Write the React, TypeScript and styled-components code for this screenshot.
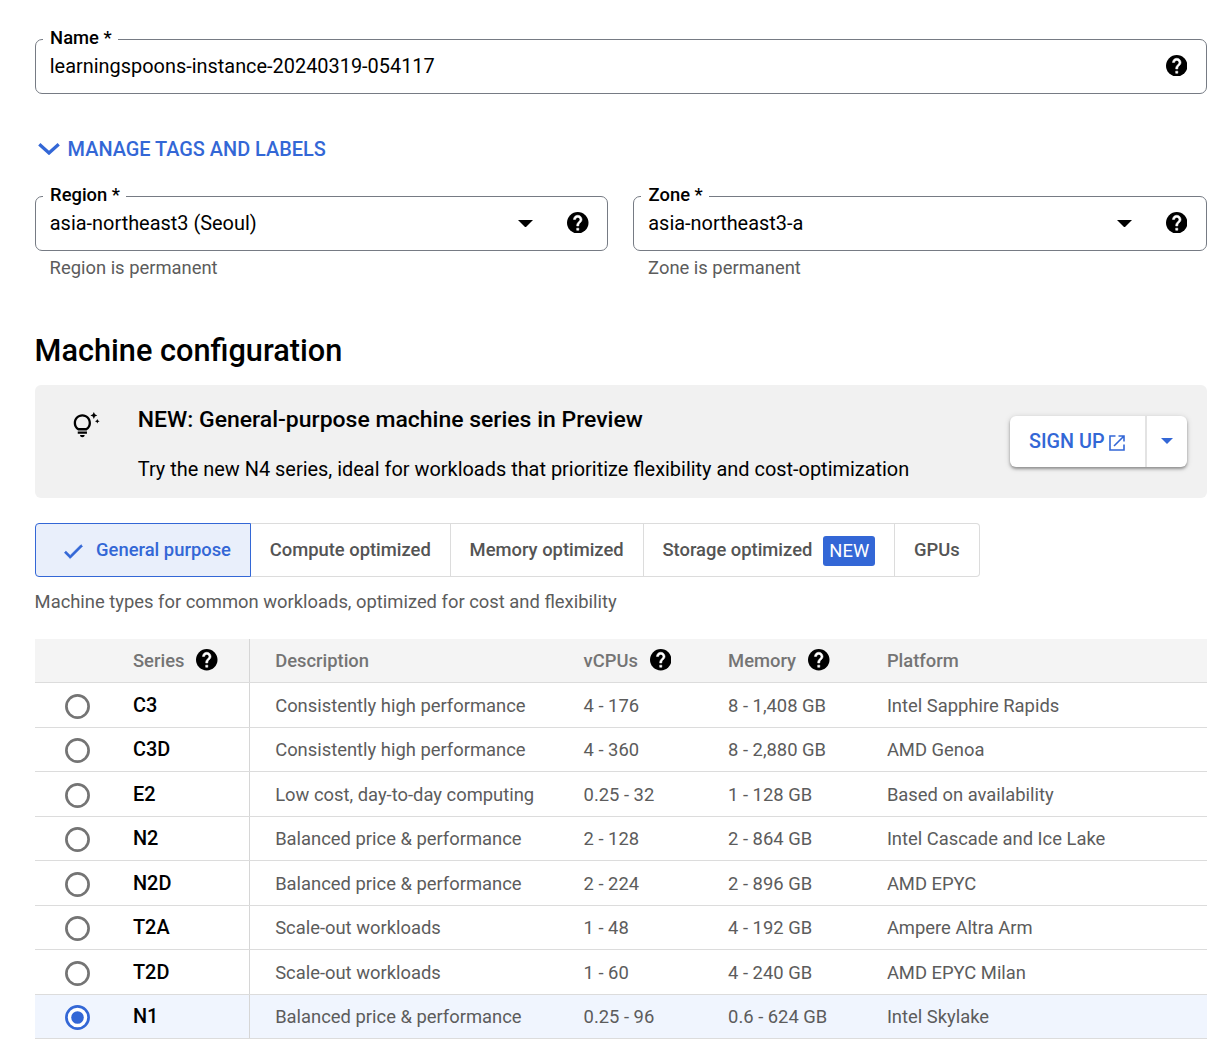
import React, { useState } from "react";
import styled, { createGlobalStyle, css } from "styled-components";

const blue = "#3367d6";
const line = "#dcdcdc";
const muted = "#5c5c5c";

const GlobalStyle = createGlobalStyle`
  *, *::before, *::after { box-sizing: border-box; }
  body {
    margin: 0;
    background: #fff;
    color: #000;
    font-family: Roboto, "Noto Sans", sans-serif;
    font-size: 18.39px;
  }
  button { font: inherit; cursor: pointer; }
`;

const Page = styled.main`
  display: flex;
  flex-direction: column;
  width: 1206.6px;
  height: 1044px;
  overflow: hidden;
  padding: 39px 0 0 34.6px;
`;

/* ---------- form fields ---------- */

const FieldColumn = styled.div`
  flex: 1 1 0;
  min-width: 0;
`;

const FieldRow = styled.div`
  display: flex;
  gap: 25px;
`;

const FieldBox = styled.div`
  position: relative;
  display: flex;
  align-items: center;
  height: 55px;
  padding: 0 18.2px 0 14.2px;
  border: 1px solid #767b84;
  border-radius: 7px;
`;

const FieldLabel = styled.label`
  position: absolute;
  top: -12px;
  left: 7px;
  padding: 0 6.3px 0 7.5px;
  background: #fff;
  font-weight: 500;
  line-height: 20px;
  white-space: nowrap;
`;

const FieldValue = styled.span`
  flex: 1;
  font-size: 19.91px;
  line-height: 24px;
  white-space: nowrap;
`;

const FieldHint = styled.div`
  margin-top: 6px;
  padding-left: 15px;
  color: ${muted};
  line-height: 22px;
`;

const CaretSlot = styled.span`
  display: flex;
  margin-right: 34px;
`;

const HelpSlot = styled.span`
  display: flex;
  padding-bottom: 2px;
`;

const ManageLink = styled.button`
  display: flex;
  align-items: center;
  align-self: flex-start;
  gap: 8px;
  height: 28px;
  margin: 41px 0 33px;
  padding: 0 0 0 3px;
  border: 0;
  background: none;
  color: ${blue};
  font-size: 19.91px;
  font-weight: 500;
`;

/* ---------- banner ---------- */

const Heading = styled.h2`
  margin: 54px 0 16px;
  font-size: 30.7px;
  font-weight: 500;
  line-height: 36px;
`;

const Banner = styled.section`
  display: flex;
  align-items: flex-start;
  height: 113px;
  padding: 0 19.6px 0 37.4px;
  border-radius: 6px;
  background: #f1f1f1;
`;

const BannerIcon = styled.div`
  display: flex;
  width: 65.8px;
  padding-top: 27px;
`;

const BannerText = styled.div`
  flex: 1;
  padding-top: 21px;
`;

const BannerTitle = styled.h3`
  margin: 0 0 23px;
  font-size: 22.98px;
  font-weight: 500;
  line-height: 28px;
`;

const BannerBody = styled.p`
  margin: 0;
  font-size: 19.93px;
  line-height: 26px;
`;

const SplitButton = styled.div`
  display: flex;
  height: 51px;
  margin-top: 31px;
  border-radius: 6px;
  background: #fff;
  box-shadow: 0 2px 3px rgba(0, 0, 0, 0.34), 0 1px 6px rgba(0, 0, 0, 0.14);
`;

const SignUp = styled.button`
  display: flex;
  align-items: center;
  gap: 4.6px;
  width: 137px;
  padding: 0 0 0 19px;
  border: 0;
  border-right: 2px solid #e3e3e3;
  background: none;
  color: ${blue};
  font-size: 19.8px;
  font-weight: 500;
`;

const MenuToggle = styled.button`
  display: flex;
  align-items: center;
  justify-content: center;
  width: 40px;
  padding: 0 1px 1px 0;
  border: 0;
  background: none;
  color: ${blue};
`;

/* ---------- machine family tabs ---------- */

const Tabs = styled.div`
  display: flex;
  align-self: flex-start;
  height: 54px;
  margin-top: 25px;
`;

const Tab = styled.button<{ $selected: boolean }>`
  display: flex;
  align-items: center;
  gap: 11px;
  padding: 0 19.1px 1px 18.7px;
  border: 1px solid ${line};
  border-left-width: 0;
  background: #fff;
  color: #545454;
  font-weight: 500;
  white-space: nowrap;

  &:first-child { border-radius: 4px 0 0 4px; border-left-width: 1px; }
  &:last-child { border-radius: 0 4px 4px 0; }

  ${(p) =>
    p.$selected &&
    css`
      padding-left: 25px;
      border-color: ${blue};
      background: #e9effb;
      color: ${blue};
    `}
`;

const Badge = styled.span`
  margin-top: 2px;
  padding: 0 6px;
  border-radius: 3px;
  background: ${blue};
  color: #fff;
  font-weight: 400;
  line-height: 30px;
`;

const FamilyHint = styled.p`
  margin: 14px 0 26px;
  color: ${muted};
  line-height: 22px;
`;

/* ---------- series table ---------- */

const Table = styled.div`
  width: 1172px;
`;

const Row = styled.div<{ $selected?: boolean }>`
  display: grid;
  grid-template-columns: 98.4px 116.6px 334px 144.5px 158.8px 1fr;
  height: 44.5px;
  border-bottom: 1px solid ${line};
  background: ${(p) => (p.$selected ? "#f0f5fe" : "#fff")};
  color: ${muted};
`;

const Cell = styled.div`
  display: flex;
  align-items: center;
  gap: 12px;
  padding-top: 1px;
  white-space: nowrap;
`;

const RadioCell = styled(Cell)`
  padding: 3px 0 0 30.7px;
`;

const SeriesCell = styled(Cell)`
  border-right: 1px solid #d6d6d6;
`;

const SeriesName = styled.span`
  color: #000;
  font-size: 19.91px;
  font-weight: 500;
`;

const DescriptionCell = styled(Cell)`
  padding-left: 25.6px;
`;

const HeaderRow = styled(Row)`
  height: 44px;
  background: #f4f4f4;
  color: #747474;
  font-weight: 500;

  ${Cell} { padding-top: 0; padding-bottom: 1px; }
`;

/* ---------- icons ---------- */

const HelpIcon = () => (
  <svg width="21.5" height="21.5" viewBox="2 2 20 20" aria-hidden="true">
    <circle cx="12" cy="12" r="10" fill="#000" />
    <path
      d="M13 19h-2v-2h2v2zM15.07 11.25l-.9.92C13.45 12.9 13 13.5 13 15h-2v-.5c0-1.1.45-2.1 1.17-2.83l1.24-1.26c.37-.36.59-.86.59-1.41 0-1.1-.9-2-2-2s-2 .9-2 2H8c0-2.21 1.79-4 4-4s4 1.79 4 4c0 .88-.36 1.68-.93 2.25z"
      fill="#fff"
      stroke="#fff"
      strokeWidth="0.45"
    />
  </svg>
);

const Caret = ({ width = 15 }: { width?: number }) => (
  <svg width={width} height={width / 2} viewBox="0 0 10 5" aria-hidden="true">
    <path d="M0 0l5 5 5-5z" fill="currentColor" />
  </svg>
);

const ChevronIcon = () => (
  <svg width="22" height="12" viewBox="0 0 22 12" aria-hidden="true">
    <path d="M1.3 1.3L11 10l9.7-8.7" fill="none" stroke="currentColor" strokeWidth="3.3" />
  </svg>
);

const TipsIcon = () => (
  <svg width="27.6" height="27.6" viewBox="0 0 24 24" aria-hidden="true">
    <path d="M7 20h4c0 1.1-.9 2-2 2s-2-.9-2-2zm-2-1h8v-2H5v2zm11.5-9.5c0 3.82-2.66 5.86-3.77 6.5H5.27c-1.11-.64-3.77-2.68-3.77-6.5C1.5 5.36 4.86 2 9 2s7.5 3.36 7.5 7.5zm-2 0C14.5 6.47 12.03 4 9 4S3.5 6.47 3.5 9.5c0 2.47 1.49 3.89 2.35 4.5h6.3c.86-.61 2.35-2.03 2.35-4.5zm6.87-2.13L20 8l1.37.63L22 10l.63-1.37L24 8l-1.37-.63L22 6l-.63 1.37zM19 6l.94-2.06L22 3l-2.06-.94L19 0l-.94 2.06L16 3l2.06.94L19 6z" />
  </svg>
);

const LaunchSvg = styled.svg`
  margin-top: 2px;
`;

const LaunchIcon = () => (
  <LaunchSvg width="16" height="16" viewBox="0 0 16 16" aria-hidden="true">
    <path
      d="M6.5 1H1v14h14V9.5M9.5 1H15v5.5M15 1L5 11"
      fill="none"
      stroke="currentColor"
      strokeWidth="1.6"
    />
  </LaunchSvg>
);

const CheckSvg = styled.svg`
  margin-top: 4px;
`;

const CheckIcon = () => (
  <CheckSvg width="24.5" height="24.5" viewBox="0 0 24 24" aria-hidden="true">
    <path
      d="M9 16.17L4.83 12l-1.42 1.41L9 19 21 7l-1.41-1.41z"
      fill="currentColor"
      stroke="currentColor"
      strokeWidth="0.8"
    />
  </CheckSvg>
);

const RadioIcon = ({ checked }: { checked: boolean }) => (
  <svg width="25" height="25" viewBox="0 0 25 25" role="radio" aria-checked={checked}>
    <circle cx="12.5" cy="12.5" r="11.1" fill="#fff" stroke={checked ? blue : "#747474"} strokeWidth="2.7" />
    {checked && <circle cx="12.5" cy="12.5" r="6.3" fill={blue} />}
  </svg>
);

/* ---------- data ---------- */

const families = [
  { name: "General purpose" },
  { name: "Compute optimized" },
  { name: "Memory optimized" },
  { name: "Storage optimized", isNew: true },
  { name: "GPUs" },
];

const series = [
  ["C3", "Consistently high performance", "4 - 176", "8 - 1,408 GB", "Intel Sapphire Rapids"],
  ["C3D", "Consistently high performance", "4 - 360", "8 - 2,880 GB", "AMD Genoa"],
  ["E2", "Low cost, day-to-day computing", "0.25 - 32", "1 - 128 GB", "Based on availability"],
  ["N2", "Balanced price & performance", "2 - 128", "2 - 864 GB", "Intel Cascade and Ice Lake"],
  ["N2D", "Balanced price & performance", "2 - 224", "2 - 896 GB", "AMD EPYC"],
  ["T2A", "Scale-out workloads", "1 - 48", "4 - 192 GB", "Ampere Altra Arm"],
  ["T2D", "Scale-out workloads", "1 - 60", "4 - 240 GB", "AMD EPYC Milan"],
  ["N1", "Balanced price & performance", "0.25 - 96", "0.6 - 624 GB", "Intel Skylake"],
];

interface FieldProps {
  label: string;
  value: string;
  hint?: string;
  select?: boolean;
}

function Field({ label, value, hint, select }: FieldProps) {
  return (
    <FieldColumn>
      <FieldBox>
        <FieldLabel>{label} *</FieldLabel>
        <FieldValue>{value}</FieldValue>
        {select && (
          <CaretSlot>
            <Caret />
          </CaretSlot>
        )}
        <HelpSlot>
          <HelpIcon />
        </HelpSlot>
      </FieldBox>
      {hint && <FieldHint>{hint}</FieldHint>}
    </FieldColumn>
  );
}

export default function App() {
  const [family, setFamily] = useState("General purpose");
  const [selected, setSelected] = useState("N1");

  return (
    <>
      <GlobalStyle />
      <Page>
        <FieldRow>
          <Field label="Name" value="learningspoons-instance-20240319-054117" />
        </FieldRow>
        <ManageLink>
          <ChevronIcon />
          MANAGE TAGS AND LABELS
        </ManageLink>
        <FieldRow>
          <Field label="Region" value="asia-northeast3 (Seoul)" hint="Region is permanent" select />
          <Field label="Zone" value="asia-northeast3-a" hint="Zone is permanent" select />
        </FieldRow>

        <Heading>Machine configuration</Heading>
        <Banner>
          <BannerIcon>
            <TipsIcon />
          </BannerIcon>
          <BannerText>
            <BannerTitle>NEW: General-purpose machine series in Preview</BannerTitle>
            <BannerBody>
              Try the new N4 series, ideal for workloads that prioritize flexibility and cost-optimization
            </BannerBody>
          </BannerText>
          <SplitButton>
            <SignUp>
              SIGN UP
              <LaunchIcon />
            </SignUp>
            <MenuToggle aria-label="More options">
              <Caret width={12} />
            </MenuToggle>
          </SplitButton>
        </Banner>

        <Tabs>
          {families.map((f) => (
            <Tab key={f.name} $selected={f.name === family} onClick={() => setFamily(f.name)}>
              {f.name === family && <CheckIcon />}
              {f.name}
              {f.isNew && <Badge>NEW</Badge>}
            </Tab>
          ))}
        </Tabs>
        <FamilyHint>Machine types for common workloads, optimized for cost and flexibility</FamilyHint>

        <Table>
          <HeaderRow>
            <Cell />
            <SeriesCell>
              Series <HelpIcon />
            </SeriesCell>
            <DescriptionCell>Description</DescriptionCell>
            <Cell>
              vCPUs <HelpIcon />
            </Cell>
            <Cell>
              Memory <HelpIcon />
            </Cell>
            <Cell>Platform</Cell>
          </HeaderRow>
          {series.map(([name, description, cpus, memory, platform]) => (
            <Row key={name} $selected={name === selected} onClick={() => setSelected(name)}>
              <RadioCell>
                <RadioIcon checked={name === selected} />
              </RadioCell>
              <SeriesCell>
                <SeriesName>{name}</SeriesName>
              </SeriesCell>
              <DescriptionCell>{description}</DescriptionCell>
              <Cell>{cpus}</Cell>
              <Cell>{memory}</Cell>
              <Cell>{platform}</Cell>
            </Row>
          ))}
        </Table>
      </Page>
    </>
  );
}
